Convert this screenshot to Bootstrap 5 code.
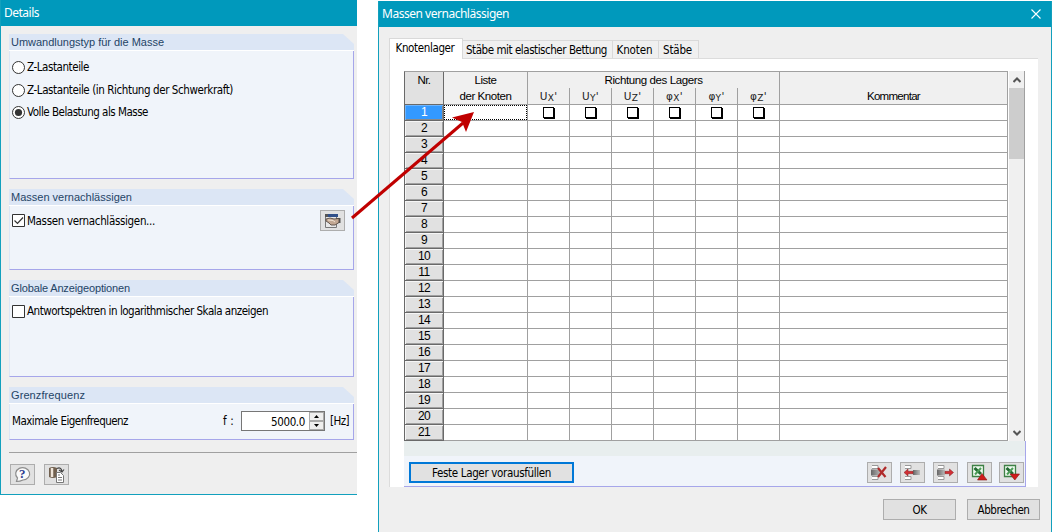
<!DOCTYPE html>
<html lang="de">
<head>
<meta charset="utf-8">
<title>Details</title>
<link href="https://cdn.jsdelivr.net/npm/bootstrap@5.3.0/dist/css/bootstrap.min.css" rel="stylesheet">
<style>
body{width:1053px;height:532px;overflow:hidden;background:#fff;color:#000;font:11.5px/14px "DejaVu Sans Condensed","DejaVu Sans",sans-serif;font-stretch:condensed}
.fit{display:inline-block;white-space:nowrap}
.dlg-left{width:357px;height:495px;background:#efefef;border:solid #12a0bd;border-width:0 0 1px 1px}
.dlg-right{width:674px;height:531px;margin:1px 0 0 21px;background:#efefef;border:solid #12a0bd;border-width:0 1px 0 1px}
.caption-bar{height:26px;background:#0099bc;color:#fff;font:12px/26px "Noto Sans",sans-serif;padding-left:3px}
.group-box{width:345px;margin-left:8px;background:#f0f4fa;border:solid #a6a6ea;border-width:0 1px 1px 0;position:relative;border-left:1px solid #dce6f5}
.group-box>header{height:17px;background:#dce6f5;border-bottom:1px solid #fff;margin-left:-1px;margin-right:-1px;padding-left:2px;color:#1f4466;font:11px/17px "Liberation Sans",sans-serif;clip-path:polygon(0 0,334px 0,345px 10px,345px 17px,0 17px)}
.group-box::before{content:"";position:absolute;right:-1px;top:0;width:11px;height:10px;background:#efefef}
.opt{height:22px;padding-left:2px}
.opt svg,.chk{flex:none}
.lbl{margin-left:2px}
.tool{width:25px;height:21px;background:#e1e1e1;border:1px solid #adadad;padding:0;display:flex;align-items:center;justify-content:center;flex:none}
.spin{width:84px;height:20px;border:1px solid #767676;background:#fff}
.spin i{display:flex;width:15px;height:9px;background:#eee;border:1px solid #aaa;align-items:center;justify-content:center}
.tab-btn{height:18px;border:1px solid #d9d9d9;border-bottom:0;border-left:0;background:#f0f0f0;text-align:center;line-height:19px;white-space:nowrap;text-indent:-1px}
.tab-btn.on{height:21px;background:#fff;border-left:1px solid #d9d9d9;margin-bottom:-1px;line-height:19px;z-index:1}
.pane{width:649px;height:429px;background:#fff;border:solid #dcdcdc;border-width:1px 0 0 1px;padding:12px 0 0 14px}
.grid-table{width:604px;table-layout:fixed;border-collapse:separate;border-spacing:0;border:solid #a0a0a0;border-width:1px 0 0 0;background:#fff;border-left:1px solid #696969;text-align:center;font:12px/15px "Liberation Sans",sans-serif}
.grid-table th{font-weight:400;background:#f0f0f0;padding:0;height:16px;font-size:11.5px;line-height:15px;border-right:1px solid #a0a0a0;white-space:nowrap}
.grid-table tr.h2 th{height:17px;border-bottom:1px solid #a0a0a0}
.grid-table td{height:16px;padding:0;border:solid #a0a0a0;border-width:0 1px 1px 0;line-height:15px}
.grid-table td:first-child{background:#e1e1e1;border-color:#696969;box-shadow:inset 1px 1px #f6f6f6,inset -1px -1px #a0a0a0;letter-spacing:-.6px}
.grid-table th:first-child{background:#e1e1e1;border-right-color:#696969}
.grid-table tr.h2 th:first-child{border-bottom-color:#696969}
.grid-table tr.sel td:first-child{background:#3399ff;color:#fff;box-shadow:inset 1px 1px #6bb4ff,inset -1px -1px #888}
.focus-cell{height:15px;outline:1px dotted #000;outline-offset:-1px;width:83px}
.grid-table th.axis{font:10.5px/13px "DejaVu Sans",sans-serif;letter-spacing:.3px;color:#222}
.axis sub{font:9px/9px "DejaVu Sans",sans-serif;position:relative;top:1px;bottom:auto;vertical-align:baseline}
.tick{width:11px;height:11px;border:1px solid #000;box-shadow:1px 1px #000;background:#fff;margin:2px auto 2px 15px}
.vscroll{width:16px;height:370px;margin-left:1px;background:#f0f0f0;border-right:1px solid #a0a0a0}
.thumb{height:71px;background:#cdcdcd}
.below{width:622px;height:31px;background:#f0f4fa;border:solid #a6a6ea;border-width:0 1px 1px 0;padding:6px 1px 0 5px}
.push{height:21px;background:#e1e1e1;border:1px solid #adadad;border-radius:0;padding:0;font:inherit;line-height:21px;text-align:center}
.push.focus{width:165px;border:2px solid #0078d7;line-height:19px}
.arrow-layer{position:absolute;left:0;top:0;pointer-events:none}
</style>
<script src="https://cdn.jsdelivr.net/npm/bootstrap@5.3.0/dist/js/bootstrap.bundle.min.js"></script>
</head>
<body>
<div class="d-flex align-items-start">
<section class="dlg-left">
  <div class="caption-bar"><span class="fit" data-w="35">Details</span></div>
  <div class="group-box" style="height:145px;margin-top:8px"><header><span class="fit" data-w="153">Umwandlungstyp für die Masse</span></header>
    <div class="opt d-flex align-items-center" style="margin-top:5px"><svg width="13" height="13"><circle cx="6.5" cy="6.5" r="6" fill="#fff" stroke="#333"/></svg><span class="fit lbl" data-w="62">Z-Lastanteile</span></div>
    <div class="opt d-flex align-items-center" style="margin-top:1px"><svg width="13" height="13"><circle cx="6.5" cy="6.5" r="6" fill="#fff" stroke="#333"/></svg><span class="fit lbl" data-w="206">Z-Lastanteile (in Richtung der Schwerkraft)</span></div>
    <div class="opt d-flex align-items-center"><svg width="13" height="13"><circle cx="6.5" cy="6.5" r="6" fill="#fff" stroke="#333"/><circle cx="6.5" cy="6.5" r="3.6" fill="#333"/></svg><span class="fit lbl" data-w="121">Volle Belastung als Masse</span></div>
  </div>
  <div class="group-box" style="height:81px;margin-top:10px"><header><span class="fit" data-w="121">Massen vernachlässigen</span></header>
    <div class="d-flex align-items-center" style="margin:4px 8px 0 2px"><svg class="chk" width="13" height="13"><path d="M.5.5h12v12H.5z" fill="#fff" stroke="#333"/><path d="M2.500 6.500l3 3 5.500-6" fill="none" stroke="#333" stroke-width="1.2"/></svg><span class="fit lbl" data-w="128">Massen vernachlässigen...</span>
      <button class="tool ms-auto" aria-label="Bearbeiten"><svg width="17" height="14"><path d="M1.500 .5h11v13h-11z" fill="#e8e8e8" stroke="#777"/><path d="M1 0h13v3H1z" fill="#304f89"/><path d="M1 0h3v3H1z" fill="#555"/><path d="M12 4h4.500v5H12z" fill="#555"/><path d="M2 5l4-1 4 1 5-.5v4l-4 2.500H7L5 9 2 7z" fill="#c2a792" stroke="#574b43" stroke-width=".9"/><path d="M4 6l5 .5 2 1.500" stroke="#eee0cf" fill="none"/></svg></button></div>
  </div>
  <div class="group-box" style="height:97px;margin-top:10px"><header><span class="fit" data-w="119">Globale Anzeigeoptionen</span></header>
    <div class="opt d-flex align-items-center" style="margin-top:3px"><svg class="chk" width="13" height="13"><path d="M.5.5h12v12H.5z" fill="#fff" stroke="#333"/></svg><span class="fit lbl" data-w="241">Antwortspektren in logarithmischer Skala anzeigen</span></div>
  </div>
  <div class="group-box" style="height:53px;margin-top:10px"><header><span class="fit" data-w="74">Grenzfrequenz</span></header>
    <div class="d-flex align-items-center" style="margin:7px 4px 0 2px"><span class="fit" data-w="116">Maximale Eigenfrequenz</span><span class="fit ms-auto" style="margin-right:7px" data-w="11">f :</span>
      <div class="spin d-flex"><span class="flex-fill text-end" style="padding:3px 4px 0 0"><span class="fit" data-w="34">5000.0</span></span><div><i><svg width="5" height="3"><path d="M0 3L2.500 0 5 3z"/></svg></i><i><svg width="5" height="3"><path d="M0 0h5L2.500 3z"/></svg></i></div></div><span class="fit" style="margin-left:5px" data-w="19">[Hz]</span></div>
  </div>
  <div style="height:1px;background:#a0a0a0;margin:12px 0 11px 8px"></div>
  <div class="d-flex" style="gap:9px;margin-left:9px">
    <button class="tool" aria-label="Hilfe"><svg width="17" height="17"><path d="M2.500 15.500l1-3.500A7 6.200 0 1 1 9 14q-3 1.500-6.500 1.500z" fill="#fafafa" stroke="#8c8c8c" stroke-width="1.2"/><text x="5" y="12" font-family="Liberation Serif" font-size="13" font-weight="700" fill="#2d3c8f">?</text></svg></button>
    <button class="tool" aria-label="Standard"><svg width="17" height="17"><path d="M1 2v9q4 2 8 0V2q-4-2-8 0" fill="#71604f"/><path d="M4 2v9" stroke="#efe5da" stroke-width="2.5"/><path d="M9 2.500q4-2 5 3M11 4l3 2 2-2.500" fill="none" stroke="#444" stroke-width="1.2"/><path d="M8.500 6.500h4l3 3v7h-7z" fill="#fff" stroke="#777"/><path d="M10 9h2M10 11.500h4M10 14h4" stroke="#777"/></svg></button>
  </div>
</section>
<section class="dlg-right">
  <div class="caption-bar d-flex align-items-center"><span class="fit" data-w="127">Massen vernachlässigen</span><svg class="ms-auto" style="margin-right:10px" width="10" height="10"><path d="M.5.5l9 9M9.500.5l-9 9" stroke="#fff" stroke-width="1.1"/></svg></div>
  <div class="d-flex align-items-end" style="margin:11px 0 0 10px;height:20px">
    <div class="tab-btn on" style="width:74px"><span class="fit" data-w="58">Knotenlager</span></div>
    <div class="tab-btn" style="width:150px"><span class="fit" data-w="140">Stäbe mit elastischer Bettung</span></div>
    <div class="tab-btn" style="width:46px"><span class="fit" data-w="35">Knoten</span></div>
    <div class="tab-btn" style="width:40px"><span class="fit" data-w="28">Stäbe</span></div>
  </div>
  <div class="pane" style="margin-left:10px">
    <div class="d-flex">
      <table class="grid-table">
        <colgroup><col style="width:39px"><col style="width:84px"><col style="width:42px"><col style="width:42px"><col style="width:42px"><col style="width:42px"><col style="width:42px"><col style="width:42px"><col style="width:228px"></colgroup>
        <thead>
          <tr><th><span class="fit" data-w="13">Nr.</span></th><th><span class="fit" data-w="22">Liste</span></th><th colspan="6"><span class="fit" data-w="98">Richtung des Lagers</span></th><th></th></tr>
          <tr class="h2"><th></th><th><span class="fit" data-w="52">der Knoten</span></th><th class="axis">U<sub>X</sub>'</th><th class="axis">U<sub>Y</sub>'</th><th class="axis">U<sub>Z</sub>'</th><th class="axis">φ<sub>X</sub>'</th><th class="axis">φ<sub>Y</sub>'</th><th class="axis">φ<sub>Z</sub>'</th><th><span class="fit" data-w="53">Kommentar</span></th></tr>
        </thead>
        <tbody id="rows"></tbody>
      </table>
      <div class="vscroll d-flex flex-column"><div style="height:17px;padding:6px 4px"><svg class="d-block" width="8" height="6"><path d="M0.500 5L4 1.500 7.500 5" fill="none" stroke="#555" stroke-width="2"/></svg></div><div class="thumb"></div><div class="mt-auto" style="height:17px;padding:6px 4px"><svg class="d-block" width="8" height="6"><path d="M.5 1L4 4.500 7.500 1" fill="none" stroke="#555" stroke-width="2"/></svg></div></div>
    </div>
    <div style="width:622px;height:15px;background:#e8eeee;border-right:1px solid #a6a6ea"></div>
    <div class="below d-flex">
      <button class="push focus"><span class="fit" data-w="119">Feste Lager vorausfüllen</span></button>
      <div class="d-flex ms-auto" style="gap:8px">
        <button class="tool" aria-label="Zeile löschen"><svg width="17" height="15"><path d="M1 .5h6v3H1M1 14.500h6v-3H1" fill="#fff" stroke="#999"/><path d="M0 4.500h10v6H0z" fill="url(#g)"/><path d="M7 3l7.500 9M15 2L7 12" stroke="#b02a2a" stroke-width="2.2"/></svg></button>
        <button class="tool" aria-label="Zeile einfügen"><svg width="17" height="15"><path d="M1 .5h6v3H1M1 14.500h6v-3H1" fill="#fff" stroke="#999"/><path d="M9 5h7v5H9z" fill="url(#g)"/><path d="M0 7.500l4-3.500v2.300h5v2.400H4V11z" fill="#d22f35" stroke="#7d2020" stroke-width=".5"/></svg></button>
        <button class="tool" aria-label="Zeile ausschneiden"><svg width="17" height="15"><path d="M1 .5h6v3H1M1 14.500h6v-3H1" fill="#fff" stroke="#999"/><path d="M0 4.500h8v6H0z" fill="url(#g)"/><path d="M16.500 7.500l-4-3.500v2.300H8v2.400h4.500V11z" fill="#d22f35" stroke="#7d2020" stroke-width=".5"/></svg></button>
        <button class="tool" style="margin-left:1px" aria-label="Excel Export"><svg width="17" height="17"><use href="#xl"/><path d="M6.500 16l4.500-6.500 5 6.500z" fill="#d01c1c" stroke="#8c1616" stroke-width=".6"/></svg></button>
        <button class="tool" style="margin-left:-1px" aria-label="Excel Import"><svg width="17" height="17"><use href="#xl"/><path d="M7 10h9.500l-4.700 6z" fill="#d01c1c" stroke="#8c1616" stroke-width=".6"/></svg></button>
      </div>
    </div>
  </div>
  <div class="d-flex justify-content-end" style="gap:11px;margin:12px 11px 0 0">
    <button class="push" style="width:73px"><span class="fit" data-w="14">OK</span></button>
    <button class="push" style="width:73px"><span class="fit" data-w="52">Abbrechen</span></button>
  </div>
</section>
</div>
<svg class="arrow-layer" width="1053" height="532">
  <defs><linearGradient id="g"><stop stop-color="#666"/><stop offset="1" stop-color="#bbb"/></linearGradient>
  <g id="xl"><path d="M1.500 1.500h11v11h-11z" fill="#f0fbf0" stroke="#3f8146" stroke-width="1.3"/><path d="M3.500 4l6.500 6" stroke="#246b33" stroke-width="3"/><path d="M10 4l-6 6.500" stroke="#4d9c57" stroke-width="2"/></g></defs>
  <path d="M352 218L463 123" stroke="#c00000" stroke-width="3"/><path d="M474 112l-22 5.500 10 4.500 4 10z" fill="#c00000"/>
</svg>
<script>
// Build the numbered rows; only the first one is filled and selected.
const rows=document.getElementById('rows');
for(let n=1;n<=21;n++){
  const tr=rows.insertRow();
  if(n===1)tr.className='sel';
  for(let c=0;c<9;c++){
    const td=tr.insertCell();
    if(c===0)td.textContent=n;
    else if(n===1&&c===1)td.innerHTML='<div class="focus-cell"></div>';
    else if(n===1&&c<8)td.innerHTML='<div class="tick"></div>';
  }
}
// Track each label so it takes its intended width.
document.querySelectorAll('.fit').forEach(e=>{
  const d=(+e.dataset.w-e.getBoundingClientRect().width)/e.textContent.length;
  e.style.letterSpacing=d.toFixed(3)+'px';
});
</script>
</body>
</html>
